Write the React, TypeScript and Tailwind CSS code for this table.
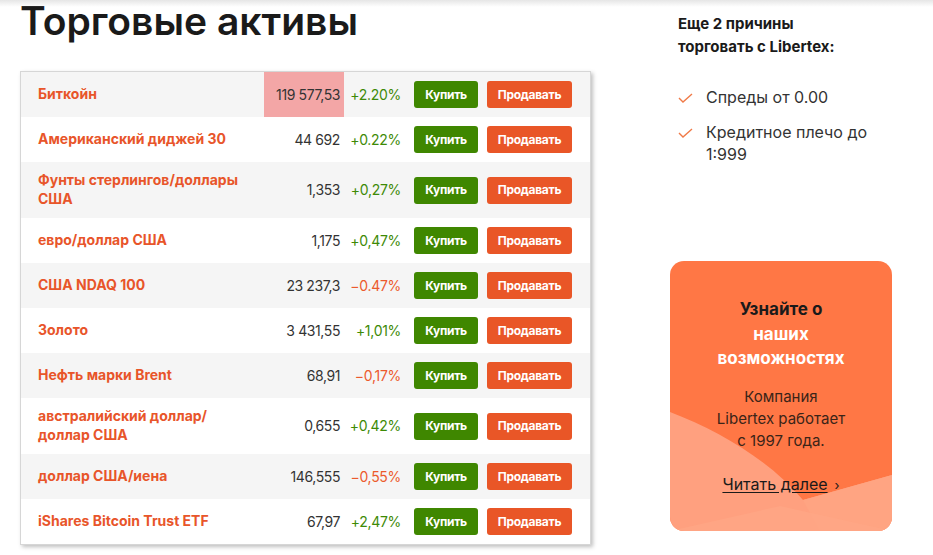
import React from 'react'

type Asset = {
  name: React.ReactNode
  price: string
  change: string
  up: boolean
  hl?: boolean
  tall?: boolean
}

const assets: Asset[] = [
  { name: 'Биткойн', price: '119 577,53', change: '+2.20%', up: true, hl: true },
  { name: 'Американский диджей 30', price: '44 692', change: '+0.22%', up: true },
  { name: <>Фунты стерлингов/доллары<br />США</>, price: '1,353', change: '+0,27%', up: true, tall: true },
  { name: 'евро/доллар США', price: '1,175', change: '+0,47%', up: true },
  { name: 'США NDAQ 100', price: '23 237,3', change: '−0.47%', up: false },
  { name: 'Золото', price: '3 431,55', change: '+1,01%', up: true },
  { name: 'Нефть марки Brent', price: '68,91', change: '−0,17%', up: false },
  { name: <>австралийский доллар/<br />доллар США</>, price: '0,655', change: '+0,42%', up: true, tall: true },
  { name: 'доллар США/иена', price: '146,555', change: '−0,55%', up: false },
  { name: 'iShares Bitcoin Trust ETF', price: '67,97', change: '+2,47%', up: true },
]

const Check = () => (
  <svg width="15" height="10" viewBox="0 0 15 10" className="shrink-0 mt-[7px]">
    <polyline points="1,5 5,9 14,1" fill="none" stroke="#f07a47" strokeWidth="1.4" />
  </svg>
)

const Row = ({ a, i }: { a: Asset; i: number }) => (
  <div className={`flex items-stretch ${a.tall ? 'h-[56px]' : 'h-[45px]'} ${i % 2 === 0 ? 'bg-[#f5f5f5]' : 'bg-white'}`}>
    <div className="flex-1 flex items-center pl-[17px] pb-[2px] text-[14px] leading-[19px] font-bold text-[#e8552a]">
      <span>{a.name}</span>
    </div>
    <div className={`w-[80px] flex items-center justify-end pr-[4px] pb-[1px] text-[14px] text-[#333] tracking-[-0.4px] ${a.hl ? 'bg-[#f3a6a6]' : ''}`}>
      {a.price}
    </div>
    <div className={`w-[57px] flex items-center justify-end pb-[1px] text-[14px] tracking-[-0.3px] ${a.up ? 'text-[#3e8a06]' : 'text-[#ec5a2d]'}`}>
      {a.change}
    </div>
    <div className="flex items-center gap-[9px] pl-[13px] pr-[18px]">
      <button className="w-[64px] h-[27px] rounded-[3px] bg-[#3f8700] text-white text-[12px] font-bold tracking-[-0.3px]">Купить</button>
      <button className="w-[85px] h-[27px] rounded-[3px] bg-[#e95627] text-white text-[12px] font-bold tracking-[-0.3px]">Продавать</button>
    </div>
  </div>
)

const App: React.FC = () => {
  return (
    <div className="relative w-[933px] h-[555px] bg-white overflow-hidden text-[#222]" style={{ fontFamily: 'Inter, "Noto Sans", sans-serif' }}>
      <div className="absolute top-0 left-0 right-0 h-[7px] bg-gradient-to-b from-[#e6e6e6] to-transparent" />
      <div className="flex pl-[20px]">
        <div className="w-[571px]">
          <h1 className="text-[39px] leading-[42px] font-semibold tracking-[0px] text-[#1a1a1a] h-[71px]">Торговые активы</h1>
          <div className="border border-[#d6d6d6] shadow-[2px_2px_4px_rgba(0,0,0,0.25)]">
            {assets.map((a, i) => (
              <Row key={i} a={a} i={i} />
            ))}
          </div>
        </div>
        <div className="ml-[79px] w-[222px]">
          <div className="pl-[8px] pt-[12px]">
            <p className="text-[15px] leading-[23px] font-bold text-[#1a1a1a]">
              Еще 2 причины<br />торговать с Libertex:
            </p>
            <ul className="mt-[28px] flex flex-col gap-[13px] text-[16px] leading-[22px] text-[#333]">
              <li className="flex gap-[13px]"><Check /><span>Спреды от 0.00</span></li>
              <li className="flex gap-[13px]"><Check /><span>Кредитное плечо до<br />1:999</span></li>
            </ul>
          </div>
          <div className="relative mt-[96px] h-[270px] rounded-[14px] bg-[#ff7745] overflow-hidden text-center">
            <svg className="absolute inset-0" width="222" height="270" viewBox="0 0 222 270">
              <path d="M0 151 C 50 170 100 200 133 239 L 222 214 L 222 270 L 0 270 Z" fill="#ffa07f" />
              <path d="M133 239 L 222 214 L 222 270 L 150 270 Z" fill="#ffa482" />
              <path d="M0 270 L 110 245 L 222 270 Z" fill="#ffa887" opacity="0.6" />
            </svg>
            <div className="relative pt-[36px]">
              <p className="text-[17px] leading-[24.5px] font-bold">
                <span className="text-[#1a1a1a]">Узнайте о</span><br />
                <span className="text-white">наших</span><br />
                <span className="text-white">возможностях</span>
              </p>
              <p className="mt-[15px] text-[15px] leading-[22px] text-[#3a2418]">
                Компания<br />Libertex работает<br />с 1997 года.
              </p>
              <p className="mt-[21px] text-[16px] leading-[22px] text-[#1a1a1a]">
                <span className="underline underline-offset-2">Читать далее</span>
                <span className="ml-[7px] text-[13px]">›</span>
              </p>
            </div>
          </div>
        </div>
      </div>
    </div>
  )
}

export default App
